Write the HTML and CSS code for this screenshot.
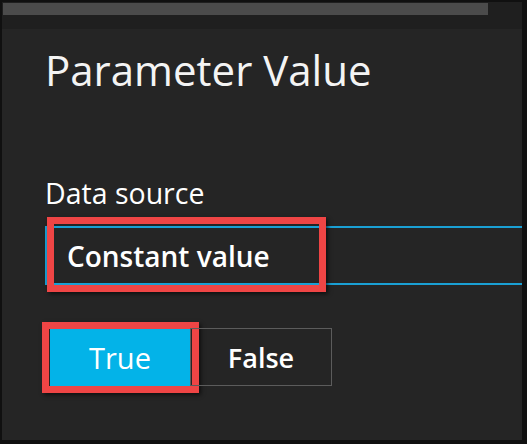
FILE: index.html
```html
<!DOCTYPE html>
<html>
<head>
<meta charset="utf-8">
<link rel="stylesheet" href="styles.css">
</head>
<body>
<div class="frame">
  <div class="topband"><div class="scrollbar"></div></div>
  <div class="content">
    <h1 class="title">Parameter Value</h1>
    <div class="label">Data source</div>
    <div class="select">
      <span class="select-text">Constant value</span>
      <div class="highlight hl-select"></div>
    </div>
    <div class="toggle">
      <div class="btn on">True<div class="highlight hl-true"></div></div>
      <div class="btn off">False</div>
    </div>
  </div>
</div>
</body>
</html>
```
FILE: styles.css
```css
html, body {
  margin: 0;
  padding: 0;
}
body {
  width: 527px;
  height: 444px;
  background: #101010;
  box-sizing: border-box;
  padding: 2px 5px 4px 2px;
  font-family: "Open Sans", "Noto Sans", sans-serif;
  color: #fff;
  overflow: hidden;
}
.frame {
  width: 520px;
  height: 438px;
  background: #252525;
  display: flex;
  flex-direction: column;
  overflow: hidden;
}
.topband {
  height: 27px;
  background: #1f1f1f;
  padding: 1px 0 0 1px;
  box-sizing: border-box;
}
.scrollbar {
  width: 485px;
  height: 12px;
  background: #4b4b4b;
}
.content {
  padding-left: 43px;
  display: flex;
  flex-direction: column;
  align-items: flex-start;
}
.title {
  margin: 15px 0 0 0;
  font-size: 42px;
  line-height: 52px;
  font-weight: 400;
  color: #f4f4f4;
}
.label {
  margin-top: 80px;
  font-size: 28.5px;
  line-height: 34px;
}
.select {
  position: relative;
  margin-top: 16px;
  width: 520px;
  height: 59px;
  box-sizing: border-box;
  border: 2px solid #1aa0d4;
  border-right: none;
  display: flex;
  align-items: center;
  padding-left: 20px;
}
.select-text {
  font-size: 28px;
  font-weight: 600;
}
.highlight {
  position: absolute;
  box-sizing: border-box;
  border: 7px solid #ef4545;
  box-shadow: 2px 2px 4px rgba(0,0,0,0.6);
}
.hl-select {
  left: 0px;
  top: -11px;
  width: 279px;
  height: 75px;
}
.toggle {
  margin-top: 43px;
  margin-left: 5px;
  display: flex;
}
.btn {
  position: relative;
  height: 58px;
  box-sizing: border-box;
  display: flex;
  align-items: center;
  justify-content: center;
  font-size: 29px;
}
.btn.on {
  width: 140px;
  background: #03b3e8;
  color: #fff;
}
.btn.off {
  width: 142px;
  border: 1px solid #5c5c5c;
  font-size: 27px;
  font-weight: 600;
}
.hl-true {
  left: -8px;
  top: -6px;
  width: 157px;
  height: 71px;
}
```
